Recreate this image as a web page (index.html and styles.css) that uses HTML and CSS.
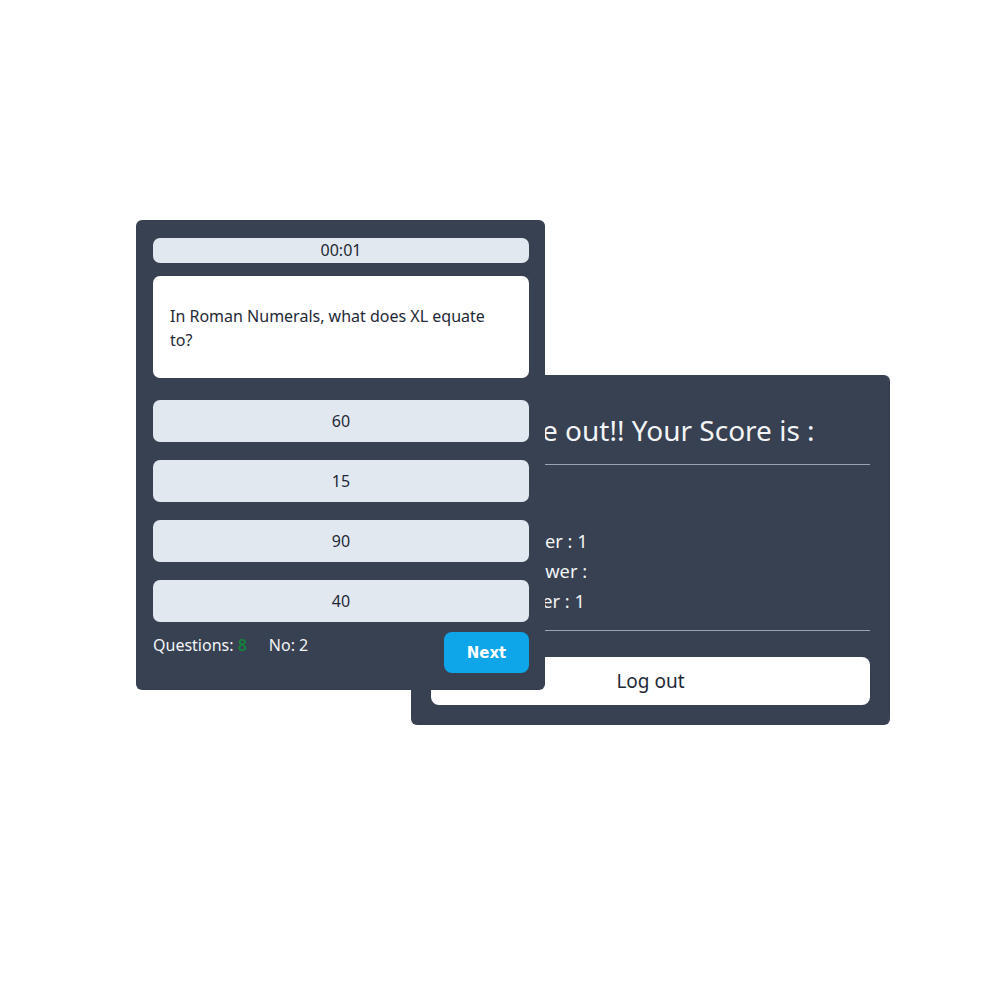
FILE: index.html
```html
<!DOCTYPE html>
<html>
<head>
<meta charset="utf-8">
<link rel="stylesheet" href="styles.css">
</head>
<body>
<div class="stage">
  <section class="score-card">
    <h2 class="score-title">Your time out!! Your Score is :</h2>
    <hr class="rule">
    <div class="score-lines">
      <p class="score-line">Correct Answer : 1</p>
      <p class="score-line">Incorrect Answer :</p>
      <p class="score-line">Missed Answer : 1</p>
    </div>
    <hr class="rule rule-bottom">
    <button class="logout">Log out</button>
  </section>
  <section class="quiz-card">
    <div class="timer">00:01</div>
    <div class="question">In Roman Numerals, what does XL equate to?</div>
    <div class="options">
      <button class="option">60</button>
      <button class="option">15</button>
      <button class="option">90</button>
      <button class="option">40</button>
    </div>
    <div class="footer">
      <div class="stats">
        <span>Questions: <span class="count">8</span></span>
        <span>No: 2</span>
      </div>
      <button class="next">Next</button>
    </div>
  </section>
</div>
</body>
</html>
```

FILE: styles.css
```css
* { box-sizing: border-box; }
html, body { margin: 0; padding: 0; background: #ffffff; }
body { font-family: "Noto Sans", "Open Sans", sans-serif; }

.stage {
  display: grid;
  padding: 220px 0 0 136px;
}
.stage > * { grid-area: 1 / 1; align-self: start; justify-self: start; }

.quiz-card {
  position: relative;
  z-index: 2;
  width: 409px;
  height: 470px;
  background: #374151;
  border-radius: 6px;
  padding: 18px 16px 17px 17px;
  display: flex;
  flex-direction: column;
}

.timer {
  height: 25px;
  background: #e2e8f0;
  border-radius: 7px;
  color: #1f2937;
  font-size: 16px;
  line-height: 25px;
  text-align: center;
}

.question {
  margin-top: 13px;
  height: 102px;
  background: #ffffff;
  border-radius: 7px;
  padding: 28px 30px 0 17px;
  color: #1f2937;
  font-size: 16px;
  line-height: 24px;
}

.options {
  margin-top: 22px;
  display: flex;
  flex-direction: column;
  gap: 18px;
}
.option {
  height: 42px;
  border: 0;
  border-radius: 7px;
  background: #e2e8f0;
  color: #1f2937;
  font-family: "Noto Sans", "Open Sans", sans-serif;
  font-size: 16px;
  text-align: center;
  padding: 0;
}

.footer {
  margin-top: 10px;
  display: flex;
  justify-content: space-between;
  align-items: flex-start;
}
.stats {
  display: flex;
  gap: 22px;
  color: #f3f4f6;
  font-size: 16px;
  line-height: 24px;
  margin-top: 1px;
}
.count { color: #15803d; font-weight: 600; }

.next {
  width: 85px;
  height: 41px;
  border: 0;
  border-radius: 8px;
  background: #0ea5e9;
  color: #ffffff;
  font-family: "DejaVu Sans", Verdana, sans-serif;
  font-weight: bold;
  font-size: 15px;
  padding: 0;
}

.score-card {
  z-index: 1;
  margin: 155px 0 0 275px;
  width: 479px;
  height: 350px;
  background: #374151;
  border-radius: 6px;
  padding: 20px 20px 20px 20px;
  color: #f3f4f6;
  display: flex;
  flex-direction: column;
}
.score-title {
  margin: 14px 0 0 0;
  font-weight: 400;
  font-size: 28px;
  line-height: 42px;
  white-space: nowrap;
}
.rule {
  margin: 13px 0 0 0;
  border: 0;
  border-top: 1px solid #9ca3af;
  height: 0;
}
.score-lines { margin-top: 61px; }
.score-line {
  margin: 0;
  font-size: 18.3px;
  line-height: 30px;
}
.rule-bottom { margin-top: 14px; }
.logout {
  margin-top: 26px;
  height: 48px;
  border: 0;
  border-radius: 8px;
  background: #ffffff;
  color: #1f2937;
  font-family: "Noto Sans", "Open Sans", sans-serif;
  font-size: 19px;
  padding: 0;
}
```
